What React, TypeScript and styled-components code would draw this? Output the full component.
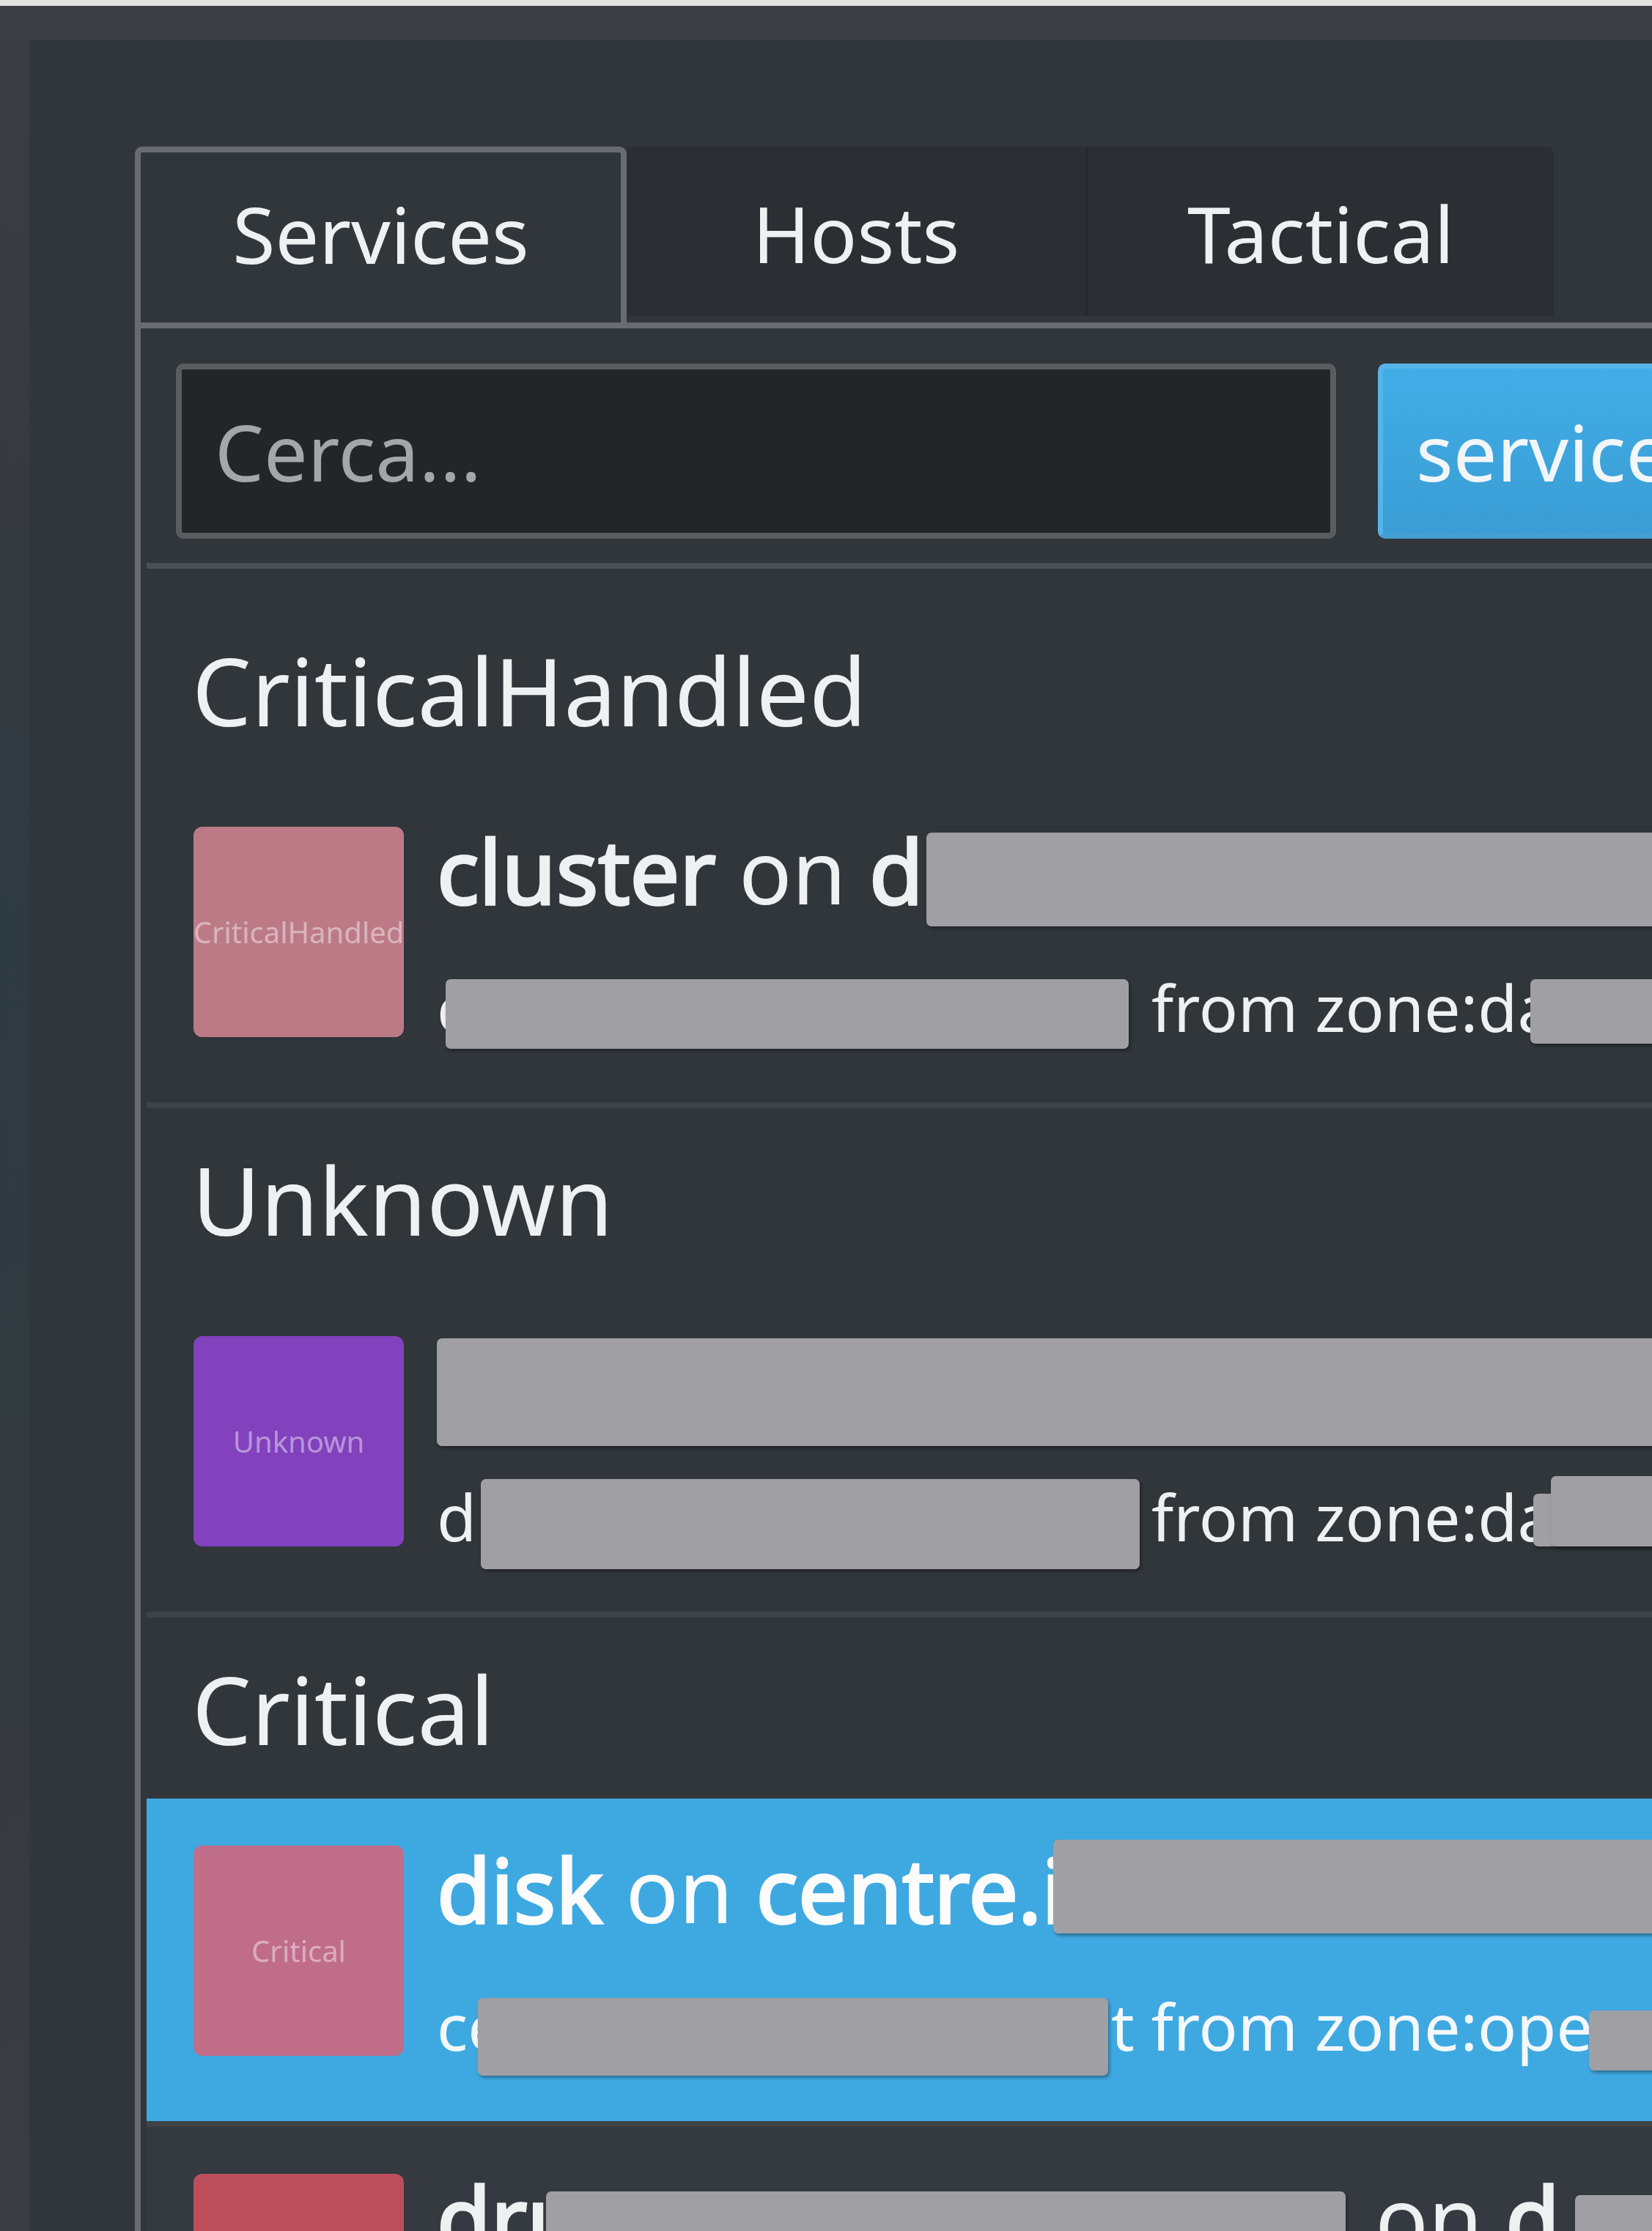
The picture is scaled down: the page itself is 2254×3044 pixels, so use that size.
import React from "react";
import styled, { createGlobalStyle } from "styled-components";

const Global = createGlobalStyle`
  html, body { margin: 0; padding: 0; background: #31363b; }
  body {
    font-family: "Noto Sans", "Open Sans", "DejaVu Sans", sans-serif;
    color: #eff0f1;
    overflow: hidden;
  }
  * { box-sizing: border-box; }
`;

const Screen = styled.div`
  width: 2254px;
  height: 3044px;
  overflow: hidden;
  display: flex;
  flex-direction: column;
  background: #3b3f43;
`;

const TopEdge = styled.div`
  flex: none;
  height: 8px;
  background: #e2e2e2;
`;

const Window = styled.div`
  flex: 1;
  min-height: 0;
  display: grid;
  grid-template-columns: 40px 1fr;
  grid-template-rows: 47px 1fr;
`;

const TitleBar = styled.div`
  grid-column: 1 / -1;
  background: #3b3f43;
`;

const SideStrip = styled.div`
  background: linear-gradient(
    180deg,
    #3a3e42 0%,
    #363a3f 20%,
    #2e3a41 40%,
    #2f3a40 55%,
    #363a3e 80%,
    #3a3e42 100%
  );
`;

const Content = styled.div`
  min-width: 0;
  overflow: hidden;
  background: #31363b;
  padding: 145px 0 0 144px;
`;

const TabBar = styled.div`
  display: flex;
  align-items: flex-start;
  height: 240px;
`;

const Tab = styled.div<{ $active?: boolean; $w: number; $divider?: boolean; $last?: boolean }>`
  flex: none;
  width: ${(p) => p.$w}px;
  height: ${(p) => (p.$active ? 240 : 231)}px;
  display: flex;
  align-items: center;
  justify-content: center;
  font-size: 106px;
  line-height: 144px;
  color: #eff0f1;
  background: ${(p) => (p.$active ? "#31363b" : "#2b2f33")};
  border: ${(p) => (p.$active ? "8px solid #686c70" : "none")};
  border-bottom: none;
  border-left: ${(p) =>
    p.$active ? "8px solid #686c70" : p.$divider ? "3px solid #25292c" : "none"};
  border-radius: ${(p) => (p.$active ? "10px 10px 0 0" : p.$last ? "0 10px 0 0" : "0")};
  padding: ${(p) => (p.$active ? "0 0 10px" : "4px 0 0")};
`;

const Panel = styled.div`
  width: 2400px;
  min-height: 2700px;
  border-top: 8px solid #686c70;
  border-left: 8px solid #686c70;
  padding-left: 8px;
  background: #31363b;
`;

const SearchBar = styled.div`
  display: flex;
  align-items: center;
  gap: 57px;
  padding: 48px 0 33px 40px;
`;

const SearchInput = styled.input`
  flex: none;
  width: 1583px;
  height: 239px;
  border: 8px solid #5a5d60;
  border-radius: 10px;
  background: #232629;
  color: #eff0f1;
  font-family: "Noto Sans", "Open Sans", sans-serif;
  font-size: 106px;
  padding: 0 0 0 45px;
  outline: none;
  &::placeholder {
    color: #a4a6a8;
  }
`;

const FilterButton = styled.div`
  flex: none;
  width: 640px;
  height: 239px;
  display: flex;
  align-items: center;
  padding-left: 45px;
  border: 7px solid #55b5e9;
  border-bottom-color: #449fd3;
  border-radius: 10px;
  background: linear-gradient(180deg, #41ade6 0%, #3a9dd4 100%);
  color: #f2f6f9;
  font-size: 106px;
  line-height: 144px;
`;

const Divider = styled.div<{ $color: string }>`
  height: 8px;
  background: ${(p) => p.$color};
`;

const List = styled.div`
  padding-top: 41px;
`;

const SectionHeading = styled.div`
  margin: 38px 0 35px 62px;
  font-size: 128px;
  line-height: 174px;
  font-weight: 400;
  color: #eff0f1;
  white-space: nowrap;
`;

const Row = styled.div<{ $bg?: string }>`
  display: flex;
  align-items: flex-start;
  gap: 45px;
  padding: 64px 0 70px 64px;
  background: ${(p) => p.$bg ?? "transparent"};
`;

const Badge = styled.div<{ $bg: string }>`
  flex: none;
  width: 287px;
  height: 287px;
  border-radius: 12px;
  background: ${(p) => p.$bg};
  display: flex;
  align-items: center;
  justify-content: center;
  font-size: 40px;
  line-height: 1;
  color: rgba(255, 255, 255, 0.45);
  white-space: nowrap;
`;

const TextCol = styled.div`
  display: flex;
  flex-direction: column;
  min-width: 0;
`;

const TitleLine = styled.div<{ $light?: boolean }>`
  display: flex;
  align-items: flex-start;
  height: 120px;
  font-size: 120px;
  line-height: 120px;
  white-space: pre;
  color: ${(p) => (p.$light ? "#fcfcfc" : "#eff0f1")};
`;

const SubLine = styled.div<{ $light?: boolean }>`
  display: flex;
  align-items: flex-start;
  height: 120px;
  margin-top: 66px;
  font-size: 88px;
  line-height: 120px;
  white-space: pre;
  color: ${(p) => (p.$light ? "#f4f8fb" : "#eff0f1")};
`;

const Run = styled.span<{ $w?: number }>`
  flex: none;
  white-space: pre;
  ${(p) => (p.$w !== undefined ? `width: ${p.$w}px;` : "")}
  overflow: visible;
`;

const B = styled.span`
  font-weight: 400;
  -webkit-text-stroke: 3.5px currentColor;
`;

const Redact = styled.span<{ $w: number; $h: number; $dy: number; $ml: number; $mr: number }>`
  flex: none;
  display: block;
  width: ${(p) => p.$w}px;
  height: ${(p) => p.$h}px;
  margin: ${(p) => `${p.$dy}px ${p.$mr}px 0 ${p.$ml}px`};
  background: #a09fa4;
  border-radius: 7px;
  box-shadow: 2px 3px 4px rgba(0, 0, 0, 0.35);
`;

interface TextPart {
  kind: "text";
  content: React.ReactNode;
  w?: number;
}
interface BoxPart {
  kind: "box";
  w: number;
  h: number;
  dy: number;
  ml: number;
  mr: number;
}
type Part = TextPart | BoxPart;

const txt = (content: React.ReactNode, w?: number): Part => ({ kind: "text", content, w });
const box = (w: number, h: number, dy: number, ml = 0, mr = 0): Part => ({
  kind: "box",
  w,
  h,
  dy,
  ml,
  mr,
});

interface RowData {
  badge: string;
  color: string;
  bg?: string;
  selected?: boolean;
  title: Part[];
  sub: Part[];
}

interface SectionData {
  heading?: string;
  rows: RowData[];
}

const sections: SectionData[] = [
  {
    heading: "CriticalHandled",
    rows: [
      {
        badge: "CriticalHandled",
        color: "#bc7a87",
        title: [
          txt(
            <>
              <B>cluster</B> on <B>d</B>
            </>,
            668
          ),
          box(1400, 128, 8),
        ],
        sub: [txt("c", 12), box(932, 95, 22, 0, 8), txt(" from zone:da", 540), box(800, 88, 22)],
      },
    ],
  },
  {
    heading: "Unknown",
    rows: [
      {
        badge: "Unknown",
        color: "#8241bd",
        title: [box(1700, 147, 3)],
        sub: [
          txt("d", 60),
          box(899, 123, 9, 0, -7),
          txt(" from zone:da", 544),
          box(800, 72, 29),
          box(800, 96, 5, -776),
        ],
      },
    ],
  },
  {
    heading: "Critical",
    rows: [
      {
        badge: "Critical",
        color: "#c06d8a",
        bg: "#3ea9e1",
        selected: true,
        title: [
          txt(
            <>
              <B>disk</B> on <B>centre.i</B>
            </>,
            841
          ),
          box(1000, 128, -8),
        ],
        sub: [txt("ce", 56), box(860, 106, 22, 0, 4), txt("t from zone:ope", 652), box(800, 82, 39)],
      },
      {
        badge: "Critical",
        color: "#bd4f5c",
        bg: "#343a40",
        title: [
          txt(<B>dru</B>, 149),
          box(1091, 130, 24, 0, 9),
          txt(
            <>
              {" on "}
              <B>d</B>
            </>,
            304
          ),
          box(600, 130, 29),
        ],
        sub: [txt("c", 12), box(900, 95, 22, 0, 8), txt(" from zone:da", 540), box(800, 88, 22)],
      },
    ],
  },
];

const renderParts = (parts: Part[]) =>
  parts.map((p, i) =>
    p.kind === "text" ? (
      <Run key={i} $w={p.w}>
        {p.content}
      </Run>
    ) : (
      <Redact key={i} $w={p.w} $h={p.h} $dy={p.dy} $ml={p.ml} $mr={p.mr} />
    )
  );

const tabs = [
  { label: "Services", w: 671, active: true },
  { label: "Hosts", w: 626 },
  { label: "Tactical", w: 639, divider: true, last: true },
];

export default function App() {
  return (
    <>
      <Global />
      <Screen>
        <TopEdge />
        <Window>
          <TitleBar />
          <SideStrip />
          <Content>
            <TabBar>
              {tabs.map((t) => (
                <Tab key={t.label} $w={t.w} $active={t.active} $divider={t.divider} $last={t.last}>
                  {t.label}
                </Tab>
              ))}
            </TabBar>
            <Panel>
              <SearchBar>
                <SearchInput placeholder="Cerca..." readOnly />
                <FilterButton>services</FilterButton>
              </SearchBar>
              <Divider $color="#4a4f53" />
              <List>
                {sections.map((s, si) => (
                  <div key={si}>
                    {s.heading && <SectionHeading>{s.heading}</SectionHeading>}
                    {s.rows.map((r, ri) => (
                      <div key={ri}>
                        <Row $bg={r.bg}>
                          <Badge $bg={r.color}>{r.badge}</Badge>
                          <TextCol>
                            <TitleLine $light={r.selected}>{renderParts(r.title)}</TitleLine>
                            <SubLine $light={r.selected}>{renderParts(r.sub)}</SubLine>
                          </TextCol>
                        </Row>
                        <Divider $color="#3e4347" />
                      </div>
                    ))}
                  </div>
                ))}
              </List>
            </Panel>
          </Content>
        </Window>
      </Screen>
    </>
  );
}
